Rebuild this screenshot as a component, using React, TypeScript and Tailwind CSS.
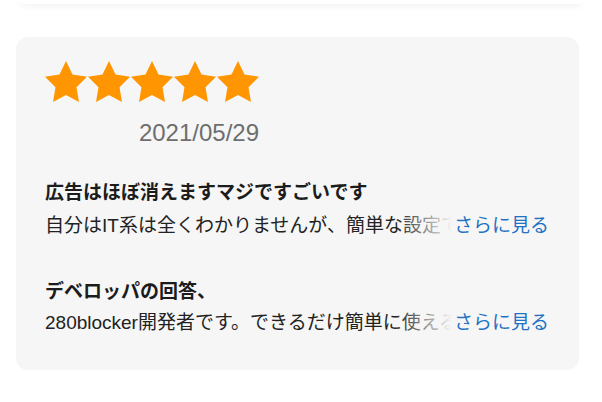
import React from 'react';

const font = {
  fontFamily: '"Liberation Sans", "Noto Sans CJK JP", sans-serif',
};

const Star = () => (
  <svg width="42" height="41" viewBox="2 2 20 19.02" preserveAspectRatio="none" className="block">
    <polygon
      points="12,2 15.09,8.26 22,9.27 17,14.14 18.18,21.02 12,17.77 5.82,21.02 7,14.14 2,9.27 8.91,8.26"
      fill="#ff9500"
    />
  </svg>
);

const MoreLine = ({ text }: { text: string }) => (
  <div className="flex items-center text-[19px] leading-[26px]">
    <div className="relative min-w-0 flex-1 overflow-hidden whitespace-nowrap text-[#222222]">
      {text}
      <div className="absolute inset-y-0 right-0 w-[56px] bg-linear-to-r from-[#f6f6f6]/0 to-[#f6f6f6]" />
    </div>
    <span className="ml-[2px] shrink-0 text-[#1f72c4]">さらに見る</span>
  </div>
);

export default function App() {
  return (
    <div className="h-[402px] w-[602px] overflow-hidden bg-white" style={font}>
      {/* previous card, mostly scrolled off */}
      <div className="mx-[20px] h-[4px] rounded-b-xl bg-white shadow-[0_2px_6px_rgba(0,0,0,0.07)]" />

      <div className="ml-[16px] mt-[33px] w-[563px] rounded-[12px] bg-[#f6f6f6] pb-[34px] pl-[29px] pr-[30px] pt-[24px]">
        <div className="inline-flex flex-col items-end">
          <div className="flex gap-[1px]">
            <Star />
            <Star />
            <Star />
            <Star />
            <Star />
          </div>
          <div className="mt-[17px] text-[24px] leading-[28px] text-[#6e6e6e]">2021/05/29</div>
        </div>

        <div className="mt-[33px]">
          <div className="text-[19px] font-bold leading-[26px] text-[#1c1c1c]">広告はほぼ消えますマジですごいです</div>
          <div className="mt-[7px]">
            <MoreLine text="自分はIT系は全くわかりませんが、簡単な設定ですぐに使えました。" />
          </div>
        </div>

        <div className="mt-[40px]">
          <div className="text-[19px] font-bold leading-[26px] text-[#1c1c1c]">デベロッパの回答、</div>
          <div className="mt-[5px]">
            <MoreLine text="280blocker開発者です。できるだけ簡単に使えるように作りました。" />
          </div>
        </div>
      </div>
    </div>
  );
}
